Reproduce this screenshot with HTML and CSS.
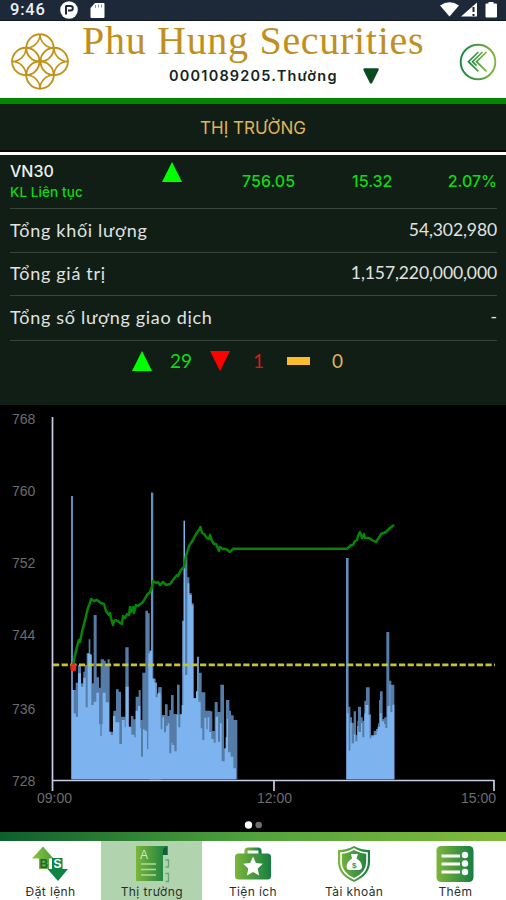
FILE: index.html
```html
<!DOCTYPE html>
<html lang="vi">
<head>
<meta charset="utf-8">
<title>Phu Hung Securities</title>
<link rel="stylesheet" href="styles.css">
</head>
<body>
<svg class="defs" width="0" height="0">
  <defs>
    <linearGradient id="leaf" x1="0" y1="0" x2="1" y2="0"><stop offset="0" stop-color="#7db63b"/><stop offset="1" stop-color="#167e42"/></linearGradient>
    <linearGradient id="lime" x1="0" y1="0" x2="1" y2="0"><stop offset="0" stop-color="#8cc63f"/><stop offset="1" stop-color="#4f9d3b"/></linearGradient>
    <linearGradient id="ring" x1="0" y1="0" x2="1" y2="0"><stop offset="0" stop-color="#168642"/><stop offset="1" stop-color="#82b73c"/></linearGradient>
  </defs>
</svg>
<div class="app">
  <div class="status">
    <span class="clock">9:46</span>
    <svg class="status-left" width="48" height="21" viewBox="58 0 48 21">
      <circle cx="69" cy="10" r="8.8" fill="#fff"/>
      <path d="M66 5.5v9M66 6h4.5a2.3 2.3 0 0 1 0 4.6H68" fill="none" stroke="#1d2939" stroke-width="2"/>
      <path d="M95 3h8.500q1 0 1 1v13q0 1-1 1H91.500q-1 0-1-1V8z" fill="#fff"/>
      <path d="M95.500 5v3M98.500 4.500v3M101.500 4.500v3" stroke="#8e96a0" stroke-width="1"/>
    </svg>
    <svg class="status-right" width="66" height="21" viewBox="440 0 66 21">
      <path d="M440 5.500q9.500-6.500 19 0L449.500 16.500z" fill="#fff"/>
      <path d="M461 16.500L477 2.500v14z" fill="#fff"/>
      <path d="M473.500 7v5M473.500 14v2" stroke="#1d2939" stroke-width="2"/>
      <path d="M488.500 3.500v-1.500h5v1.500h2.500q1 0 1 1V16.500q0 1-1 1h-9.500q-1 0-1-1V4.500q0-1 1-1z" fill="#fff"/>
    </svg>
  </div>
  <header class="header">
    <svg class="logo" width="60" height="58" viewBox="0 0 60 58">
      <g fill="none" stroke="#c4921b" stroke-width="1.900">
        <circle cx="30" cy="15" r="13.700"/><circle cx="30" cy="42" r="13.700"/>
        <circle cx="15.800" cy="28.500" r="13.700"/><circle cx="44.200" cy="28.500" r="13.700"/>
        <path d="M30 1.500A13.800 13.800 0 0 1 16 15 13.800 13.800 0 0 1 2 28.500 13.800 13.800 0 0 1 16 42 13.800 13.800 0 0 1 30 55.500 13.800 13.800 0 0 1 44 42 13.800 13.800 0 0 1 58 28.500 13.800 13.800 0 0 1 44 15 13.800 13.800 0 0 1 30 1.500z" stroke-width="1.600"/>
      </g>
    </svg>
    <div class="brand">
      <div class="brand-name">Phu Hung Securities</div>
      <div class="account"><span class="account-name">0001089205.Thường</span>
        <svg width="18" height="18" viewBox="0 0 18 18"><path d="M2.500 2.500h13L9 15.500z" fill="#0b4b20" stroke="#0b4b20" stroke-width="2.500" stroke-linejoin="round"/></svg>
      </div>
    </div>
    <svg class="back" width="38" height="38" viewBox="0 0 38 38">
      <circle cx="19" cy="19" r="17.300" fill="none" stroke="url(#ring)" stroke-width="1.900"/>
      <path d="M19.300 9L9.500 18.700l9.800 9.700M27.500 9L17.500 18.700l10 9.700M23.500 9L13.500 18.700l4 4" fill="none" stroke="url(#ring)" stroke-width="1.700"/>
    </svg>
  </header>
  <div class="title">THỊ TRƯỜNG</div>
  <section class="panel">
    <div class="row index">
      <div class="index-name"><span>VN30</span><span class="session">KL Liên tục</span></div>
      <svg class="index-arrow" width="20" height="20" viewBox="0 0 20 20"><path d="M10 0L20 20H0z" fill="#0f0"/></svg>
      <span class="price">756.05</span><span class="change">15.32</span><span class="percent">2.07%</span>
    </div>
    <div class="row r1"><span class="label">Tổng khối lượng</span><span class="value">54,302,980</span></div>
    <div class="row r2"><span class="label">Tổng giá trị</span><span class="value">1,157,220,000,000</span></div>
    <div class="row r3"><span class="label">Tổng số lượng giao dịch</span><span class="value">-</span></div>
    <div class="breadth">
      <svg width="20" height="20" viewBox="0 0 20 20"><path d="M10 0L20 20H0z" fill="#0f0"/></svg>
      <span class="up">29</span>
      <svg width="20" height="20" viewBox="0 0 20 20"><path d="M0 0h20L10 20z" fill="#f00"/></svg>
      <span class="down">1</span>
      <i class="flat-mark"></i>
      <span class="flat">0</span>
    </div>
  </section>
  <section class="chart">
    <svg width="506" height="427" viewBox="0 405 506 427">
      <g class="axis-label">
        <text x="12" y="423.500">768</text><text x="12" y="495.500">760</text><text x="12" y="567.500">752</text>
        <text x="12" y="640">744</text><text x="12" y="713.500">736</text><text x="12" y="785.500">728</text>
        <text x="37" y="802.500">09:00</text><text x="257" y="802.500">12:00</text><text x="461" y="802.500">15:00</text>
      </g>
      <g transform="translate(60 590) scale(.33333)">
        <path class="bars-dim" d="M33 568V-282H39V300H47V278H54V225H63V280H70V245H74V225H80V190H86V148H91V195H96V280H101V75H110V262H117V293H122V208H132V212H137V225H143V208H149V425H160V362H168V298H176V305H183V380H196V172H206V410H213V378H220V388H227V320H236V300H242V390H247V248H256V62H264V70H269V182H274V-292H280V266H287V278H291V318H296V292H304V568z"/>
        <path class="bars" d="M35 568V-282H37V300H41V370H47V380H54V250H63V290H70V263H77V352H83V190H87V193H94V345H101V335H109V308H117V403H121V438H125V403H128V308H137V337H147V425H152V435H159V378H166V397H178V462H186V390H194V412H197V290H206V410H214V434H223V442H227V362H234V348H241V415H243V500H249V418H254V422H261V478H265V190H274V-292H276V266H285V278H290V318H304V568z"/>
      </g>
      <g transform="translate(150 590) scale(.33333)">
        <path class="bars-dim" d="M0 568V182H4V-292H9V266H14V278H19V312H25V292H35V375H45V343H53V378H58V360H63V315H71V372H81V284H89V372H96V92H101V-208H105V-100H112V-38H118V9H125V40H131V325H142V200H147V248H155V307H166V362H181V364H187V423H194V336H203V366H211V284H222V475H228V330H238V362H243V376H251V390H262V568z"/>
        <path class="bars" d="M0 568V182H5V-292H7V266H12V278H17V322H23V308H32V418H37V382H42V427H48V408H53V400H58V490H64V458H67V465H73V484H80V375H85V412H91V374H95V345H100V92H105V255H112V-20H118V15H125V46H130V325H138V304H142V200H145V335H152V415H157V450H163V383H169V418H173V382H178V426H184V447H191V458H197V380H204V455H210V400H215V514H224V476H227V442H231V386H234V487H242V500H250V535H258V568z"/>
        <path class="bars" d="M101 -208H105V255H101z"/>
      </g>
      <g transform="translate(330 500) scale(.33333)">
        <path class="bars-dim" d="M48 838V174H56V620H61V652H66V668H71V634H78V705H82V662H84V620H93V652H98V662H103V602H108V562H119V643H123V705H131V692H138V687H144V670H147V600H150V574H158V657H163V652H169V396H178V542H184V554H193V838z"/>
        <path class="bars" d="M50 838V174H52V640H56V752H61V668H65V730H72V703H76V724H82V678H85V696H93V670H97V712H103V640H106V615H115V645H119V715H124V709H132V705H140V694H143V680H150V640H155V664H162V672H166V684H172V618H179V554H181V636H187V614H193V838z"/>
      </g>
      <path d="M52.500 417V791M52 780.500H494.500M274 780v11M494 780v11" fill="none" stroke="#c9cde2" stroke-width="1.700"/>
      <path d="M53 664.800H495" stroke="#c6c52c" stroke-width="2.700" stroke-dasharray="6.200 2.450"/>
      <path d="M73 666L75 655 78 643 79 640 80 642 82 632 85 620 88 608 90 603 91 599 94 601 97 600 101 603 104 604 106 611 109 615 110 613 111 618 113 625 114 621 116 620 119 622 122 624 123 616 125 618 127 614 129 615 130 607 131 612 133 607 134 613 136 605 138 606 143 602 147 595 150 592 152 587 153 581 156 583 158 582 160 585 163 582 166 585 170 584 173 580 177 575 178 576 181 570 184 567 186 556 189 546 193 540 196 534 199 530 200.500 527 202 533 204 534 207 538 209 539 210 535 212 541 214 544 216 544 219 551 220 547 223 549 226 549 230 552 233 548.800 347 548.800 351 545 353 545 355 541 357 540 358 536 360 532 362 538 364 534 365 538 369 538 372 540 376 542 380 536 381 534 386 532 390 528 394 525" fill="none" stroke="#078407" stroke-width="2.500" stroke-linejoin="round"/>
      <rect x="70.500" y="664" width="5.500" height="7" rx="1.500" fill="#f42a18"/>
      <circle cx="248.500" cy="825" r="3.700" fill="#fff"/><circle cx="258.700" cy="825" r="3.300" fill="#6d6d6d"/>
    </svg>
  </section>
  <nav class="nav">
    <a class="tab">
      <svg width="38" height="38" viewBox="0 0 38 38">
        <path d="M11 1.500L21.500 13.500H17V24H7V13.500H0z" fill="url(#lime)"/>
        <path d="M20 13h10.500v11h5.500L26 36 15.500 24H20z" fill="#118347"/>
        <text x="7.500" y="22.500" class="glyph g-b">B</text><text x="21.500" y="22.500" class="glyph g-s">S</text>
      </svg><span>Đặt lệnh</span></a>
    <a class="tab active">
      <svg width="38" height="38" viewBox="0 0 38 38">
        <path d="M3 1H34.500V10H30V36H3z" fill="url(#leaf)"/>
        <path d="M34.500 1V10H30V4z" fill="#135d37"/>
        <text x="7" y="14" class="glyph g-a">A</text>
        <path d="M8 19h15M8 24.500h15M8 30h15" stroke="#b5d999" stroke-width="1.500"/>
        <path d="M32.500 15h3v7h-3M32.500 28.500h3v8h-3" fill="none" stroke="#62a675" stroke-width="1.300"/>
      </svg><span>Thị trường</span></a>
    <a class="tab">
      <svg width="38" height="38" viewBox="0 0 38 38">
        <path d="M12 9V6q0-2 2-2H24q2 0 2 2V9" fill="none" stroke="url(#leaf)" stroke-width="3.200"/>
        <rect x="1" y="8.500" width="36" height="26" rx="3.500" fill="url(#leaf)"/>
        <path d="M19 11.500L21.900 18l7 .8-5.200 4.700 1.400 6.900L19 27l-6.100 3.400 1.400-6.900L9.100 18.800l7-.8z" fill="#fff"/>
      </svg><span>Tiện ích</span></a>
    <a class="tab">
      <svg width="38" height="38" viewBox="0 0 38 38">
        <path d="M19 1Q26 5 35 5V17Q35 30 19 37 3 30 3 17V5Q12 5 19 1z" fill="url(#leaf)"/>
        <path d="M19 4Q26 8 32 8V17Q32 28 19 34 6 28 6 17V8Q12 8 19 4z" fill="none" stroke="#fff" stroke-width="1.600"/>
        <path d="M16 9h7l-1.500 4.500Q27 17 27 21.500 27 25 23 25H15.500Q11.500 25 11.500 21.500 11.500 17 17 13.500z" fill="#fff"/>
        <text x="17" y="22.500" class="glyph g-d">$</text>
      </svg><span>Tài khoản</span></a>
    <a class="tab">
      <svg width="38" height="38" viewBox="0 0 38 38">
        <rect x=".5" y="1" width="37" height="36" rx="4.500" fill="url(#leaf)"/>
        <path d="M5.500 11H24M5.500 19H24M5.500 27H24" stroke="#fff" stroke-width="2.800"/>
        <circle cx="29" cy="10" r="3.200" fill="#fff"/><circle cx="29" cy="18.500" r="3.200" fill="#fff"/><circle cx="29" cy="27" r="3.200" fill="#fff"/>
      </svg><span>Thêm</span></a>
  </nav>
</div>
</body>
</html>
```
FILE: styles.css
```css
* { box-sizing: border-box; }
body { margin: 0; background: #fff; }
.defs { display: block; }
.app { width: 506px; height: 900px; display: flex; flex-direction: column; overflow: hidden; font-family: Inter, Roboto, "Liberation Sans", sans-serif; }
.app svg { display: block; flex: none; }
.status { height: 21px; flex: none; display: flex; align-items: center; background: #1d2939; border-bottom: 1px solid #101820; color: #fff; padding-left: 10px; }
.clock { width: 48px; font: 500 16.500px/20px Roboto, sans-serif; letter-spacing: .8px; color: #eef0f2; }
.status-right { margin-left: auto; }
.header { height: 83px; flex: none; display: flex; background: #fff; border-bottom: 6px solid #028704; }
.logo { margin: 12px 0 0 10px; }
.brand { width: 342px; margin-left: 12px; white-space: nowrap; }
.brand-name { height: 43px; font: 40px/40px "Liberation Serif", serif; letter-spacing: .7px; color: #c18f20; }
.account { height: 24px; display: flex; align-items: center; padding-left: 87px; color: #15251c; }
.account-name { width: 193px; font: 600 14.500px/24px Inter, sans-serif; letter-spacing: 1.200px; }
.back { margin: 22px 0 0 35px; }
.title { height: 51px; flex: none; background: #101e15; border-bottom: 3px solid #fff; box-shadow: inset 0 -2px #050805; text-align: center; font-size: 17px; line-height: 48px; color: #e1b55c; font-weight: 400; }
.panel { height: 250px; flex: none; padding: 0 9px 0 10px; background: #101e15; color: #e1e3e1; font: 18px/24px Lato, sans-serif; white-space: nowrap; }
.row { display: flex; justify-content: space-between; align-items: center; border-bottom: 1px solid #3a443d; padding-bottom: 2px; }
.index { height: 54px; justify-content: flex-start; color: #0bdc14; font: 500 16px/22px Inter, sans-serif; }
.index-name { width: 152px; display: flex; flex-direction: column; color: #f0f0f0; font-size: 16px; line-height: 22px; }
.session { font-size: 13.500px; line-height: 20px; letter-spacing: .1px; color: #06dc14; }
.index-arrow { margin: -18px 58px 0 0; }
.price { width: 112px; padding-left: 2px; }
.change { width: 94px; }
.percent { margin-left: auto; }
.r1 { height: 44px; }
.r2 { height: 43px; }
.r3 { height: 45px; }
.label { letter-spacing: .7px; }
.value { font-size: 17.500px; letter-spacing: -.1px; }
.breadth { height: 40px; display: flex; align-items: center; font-size: 19px; }
.breadth svg:first-child { margin-left: 122px; }
.up { width: 58px; padding-left: 18px; color: #0bdc14; }
.down { width: 57px; padding-left: 23px; color: #d41b16; }
.flat-mark { width: 23px; height: 8px; background: #fdbc2c; }
.flat { padding-left: 22px; color: #dfb459; }
.chart { height: 427px; flex: none; background: #000; }
.axis-label { font: 14px "Liberation Sans", sans-serif; fill: #6c6c6c; }
.bars { fill: #7db4ef; }
.bars-dim { fill: #547ca6; }
.nav { height: 68px; flex: none; display: flex; border-top: 9px solid; border-image: linear-gradient(90deg, #0c602c, #51a33c 50%, #82ba3d) 9 0 0; background: #fff; }
.tab { flex: 1; display: flex; flex-direction: column; align-items: center; padding-top: 4px; font: 12px/18px Inter, sans-serif; letter-spacing: .4px; color: #26302a; }
.tab span { white-space: nowrap; }
.active { background: #b1d3ae; }
.glyph { font: 700 12px "Liberation Sans", sans-serif; letter-spacing: 0; }
.g-b { fill: #176b2e; }
.g-s { fill: #fff; }
.g-a { font-weight: 400; fill: #d1e8be; }
.g-d { font-size: 8px; fill: #46943b; }
```
